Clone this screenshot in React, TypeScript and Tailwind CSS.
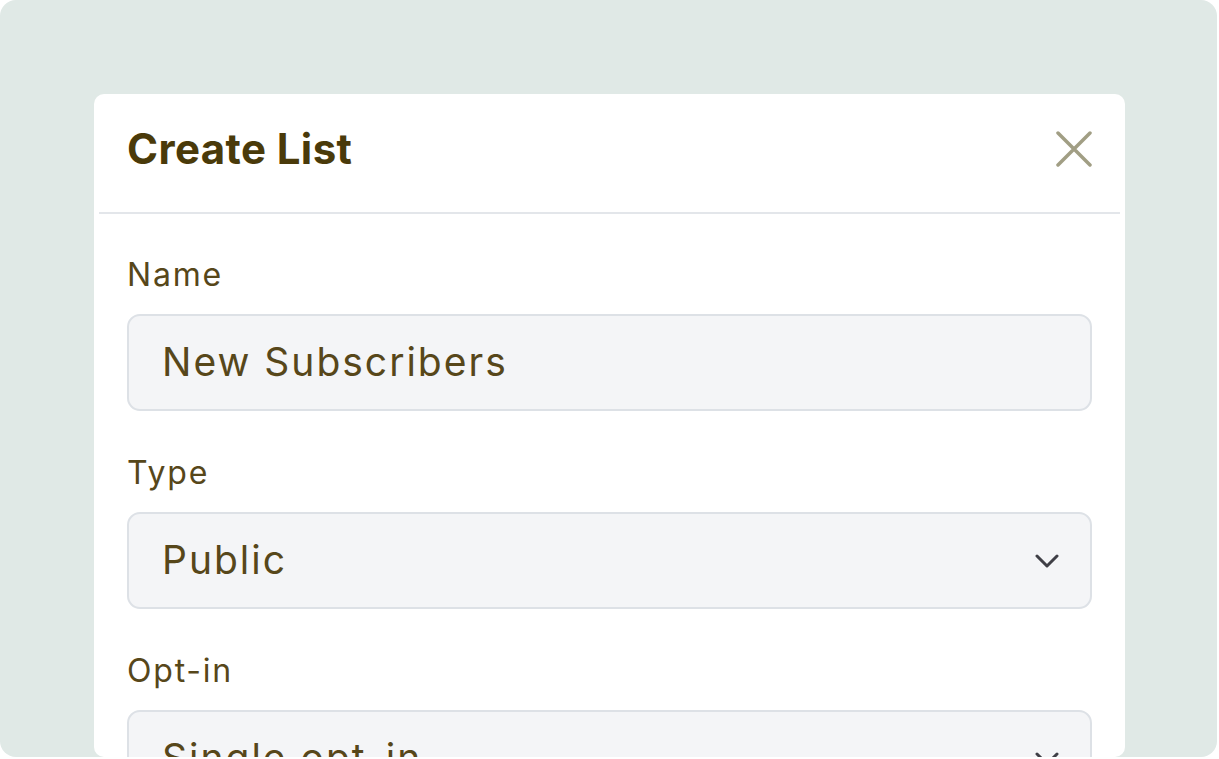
import type { ReactNode } from "react";

const font = { fontFamily: "Inter, 'Noto Sans', sans-serif" };

function Field({ label, children }: { label: string; children: ReactNode }) {
  return (
    <div className="flex flex-col">
      <label className="h-[40px] text-[32px] leading-[40px] tracking-[1.8px] text-[#57471a]">{label}</label>
      <div className="mt-[19px] mb-[42px]">{children}</div>
    </div>
  );
}

function Chevron() {
  return (
    <svg width="24" height="14" viewBox="0 0 24 14" fill="none" className="shrink-0">
      <path d="M2 2l10 10L22 2" stroke="#3f3f46" strokeWidth="3" strokeLinecap="round" strokeLinejoin="round" />
    </svg>
  );
}

function Box({ value, select }: { value: string; select?: boolean }) {
  return (
    <div className="flex h-[97px] items-center justify-between rounded-[13px] border-2 border-[#dde1e6] bg-[#f4f5f7] pl-[33px] pr-[31px]">
      <span className="text-[39px] tracking-[2px] text-[#57471a]">{value}</span>
      {select && <Chevron />}
    </div>
  );
}

export default function App() {
  return (
    <div style={font} className="h-[757px] w-[1217px] overflow-hidden rounded-2xl bg-[#e0e9e6] pl-[94px] pt-[94px]">
      <div className="h-[663px] w-[1031px] overflow-hidden rounded-[10px] bg-white">
        <div className="flex h-[118px] items-center justify-between px-[33px] pb-[9px]">
          <h2 className="text-[42px] font-bold tracking-[0.4px] text-[#4a3a0a]">Create List</h2>
          <button className="text-[#a19e84]">
            <svg width="36" height="36" viewBox="0 0 36 36" fill="none">
              <path d="M2 2l32 32M34 2L2 34" stroke="currentColor" strokeWidth="3.5" strokeLinecap="round" />
            </svg>
          </button>
        </div>
        <div className="mx-[5px] h-[2px] bg-[#e3e6ea]" />
        <div className="px-[33px] pt-[41px]">
          <Field label="Name">
            <Box value="New Subscribers" />
          </Field>
          <Field label="Type">
            <Box value="Public" select />
          </Field>
          <Field label="Opt-in">
            <Box value="Single opt-in" select />
          </Field>
        </div>
      </div>
    </div>
  );
}
